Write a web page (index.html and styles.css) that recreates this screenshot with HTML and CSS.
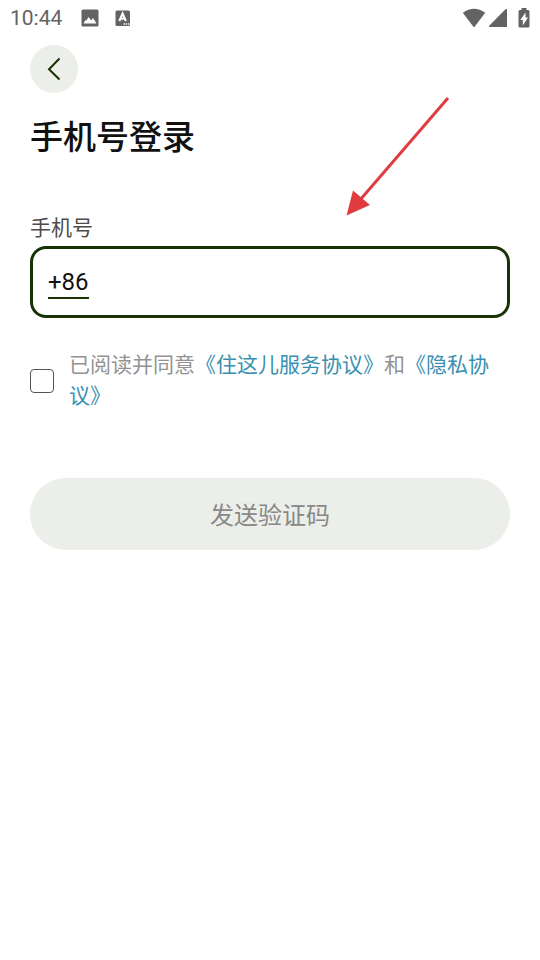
FILE: index.html
```html
<!DOCTYPE html>
<html lang="zh-CN">
<head>
<meta charset="utf-8">
<meta name="viewport" content="width=device-width, initial-scale=1">
<title>手机号登录</title>
<link rel="stylesheet" href="styles.css">
</head>
<body>
<header class="status">
  <time class="clock">10:44</time>
  <svg class="status-icon" width="18" height="18" viewBox="0 0 18 18" aria-hidden="true"><path fill="#636363" fill-rule="evenodd" d="M2 0.500H16Q17.500 .5 17.500 2V16Q17.500 17.500 16 17.500H2Q.5 17.500 .5 16V2Q.5 .5 2 .5ZM2.500 14.500H15.500L12 9L10.300 11.500L7.500 8L5.500 11.500L4.500 11Z"/></svg>
  <svg class="status-icon" width="16" height="18" viewBox="0 0 16 18" aria-hidden="true"><rect x=".5" y="1.500" width="14.500" height="15.500" rx="1.500" fill="#636363"/><path d="M4.300 12L7.600 4.500L10.900 12M5.500 9.700H9.700" fill="none" stroke="#fff" stroke-width="2.100"/><path d="M8.500 15H14.500" stroke="#fff" stroke-width="1.400" stroke-dasharray="1.400 .8"/></svg>
  <div class="signals">
    <svg width="24" height="20" viewBox="0 0 24 20" aria-hidden="true"><path fill="#636363" d="M.8 4.800Q12-3.200 23.200 4.800L12.800 18.500Q12 19.500 11.200 18.500Z"/></svg>
    <svg width="20" height="20" viewBox="0 0 20 20" aria-hidden="true"><path fill="#636363" d="M19 1.500V19H1.500Q.5 18.500 1.200 17.700L17.500 1.300Q18.500 .5 19 1.500Z"/></svg>
    <svg class="battery" width="12" height="20" viewBox="0 0 12 20" aria-hidden="true"><path fill="#636363" d="M3.500 0H8.500V2H10Q11.500 2 11.500 3.500V18Q11.500 19.500 10 19.500H2Q.5 19.500 .5 18V3.500Q.5 2 2 2H3.500Z"/><path fill="#fff" d="M7.500 4.500V9.500H10L4.800 17.500V12H2.300Z"/></svg>
  </div>
</header>
<main class="page">
  <button class="back" type="button" aria-label="返回">
    <svg width="24" height="24" viewBox="0 0 24 24" aria-hidden="true"><path d="M17.500 1.500L7 12.200L17.500 22.500" fill="none" stroke="#183204" stroke-width="2"/></svg>
  </button>
  <h1 class="title">手机号登录</h1>
  <form class="form">
    <label class="label" for="phone">手机号</label>
    <div class="field">
      <button class="prefix" type="button">+86</button>
      <input class="phone" id="phone" type="tel">
    </div>
    <div class="agreement">
      <input class="check" id="agree" type="checkbox">
      <label class="terms" for="agree">已阅读并同意<a href="#service">《住这儿服务协议》</a>和<a href="#privacy">《隐私协议》</a></label>
    </div>
    <button class="submit" type="submit" disabled>发送验证码</button>
  </form>
</main>
<svg class="arrow" width="110" height="124" viewBox="0 0 110 124" aria-hidden="true"><path d="M105 5L17 107" stroke="#e03c40" stroke-width="3"/><path d="M3.500 122.500L10 97.500L27 112Z" fill="#e03c40"/></svg>
</body>
</html>
```
FILE: styles.css
```css
* {
  box-sizing: border-box;
}

body {
  position: relative;
  margin: 0;
  background: #fff;
  color: #111;
  font-family: Roboto, "Noto Sans CJK SC", sans-serif;
}

button,
input {
  margin: 0;
  padding: 0;
  border: 0;
  background: none;
  font: inherit;
  color: inherit;
}

svg {
  display: block;
}

.status {
  display: flex;
  align-items: center;
  height: 36px;
  padding: 0 10px;
  color: #636363;
}

.clock {
  margin-right: 19px;
  font-size: 21px;
  line-height: 24px;
}

.status-icon {
  margin-right: 16px;
}

.signals {
  display: flex;
  gap: 2px;
  margin-left: auto;
}

.battery {
  margin-left: 8px;
}

.page {
  padding: 9px 30px;
}

.back {
  display: grid;
  place-items: center;
  width: 48px;
  height: 48px;
  border-radius: 50%;
  background: #ebeee9;
}

.title {
  margin: 21px 0 51px;
  font-size: 33px;
  font-weight: 500;
  line-height: 48px;
}

.label {
  display: block;
  color: #4c4c4c;
  font-size: 21px;
  line-height: 30px;
  margin-bottom: 3px;
}

.field {
  display: flex;
  align-items: center;
  gap: 15px;
  height: 72px;
  padding: 0 15px;
  border: 3px solid #183204;
  border-radius: 16px;
}

.prefix {
  padding-top: 2px;
  border-bottom: 2px solid #183204;
  font-size: 24px;
  line-height: 30px;
}

.phone {
  flex: 1;
  min-width: 0;
  outline: 0;
  font-size: 24px;
}

.agreement {
  display: flex;
  align-items: center;
  gap: 15px;
  margin: 32px 0 66px;
}

.check {
  flex: none;
  appearance: none;
  width: 24px;
  height: 24px;
  border: 1px solid #555;
  border-radius: 4px;
}

.check:checked {
  background: #183204;
}

.terms {
  padding-right: 15px;
  color: #929292;
  font-size: 21px;
  line-height: 31px;
}

.terms a {
  color: #398fb0;
  text-decoration: none;
}

.submit {
  display: block;
  width: 100%;
  height: 72px;
  padding-bottom: 2px;
  border-radius: 36px;
  background: #ebeee9;
  color: #888;
  font-size: 24px;
}

.arrow {
  position: absolute;
  top: 93px;
  left: 343px;
  pointer-events: none;
}
```
